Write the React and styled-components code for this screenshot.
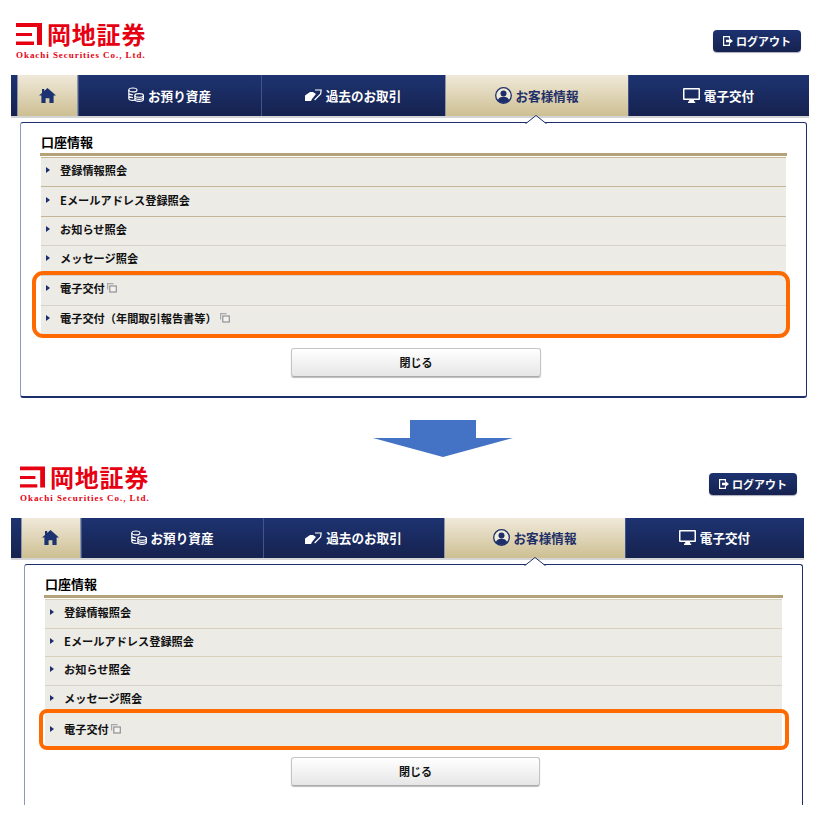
import React from 'react';
import styled, { createGlobalStyle } from 'styled-components';

const GlobalStyle = createGlobalStyle`
  html, body { margin: 0; padding: 0; background: #fff; }
  body { font-family: "Liberation Sans", "Noto Sans CJK JP", sans-serif; }
`;

const Page = styled.div`
  width: 819px;
  height: 824px;
  overflow: hidden;
`;

const Header = styled.div`
  display: flex;
  justify-content: space-between;
  align-items: flex-start;
  box-sizing: border-box;
  height: ${p => p.$height}px;
  padding: ${p => p.$top}px ${p => p.$right}px 0 ${p => p.$left}px;
`;

const Logo = styled.div`
  display: flex;
  flex-direction: column;
`;

const LogoTop = styled.div`
  display: flex;
  align-items: center;
  gap: 5px;
  height: 24px;
`;

const LogoName = styled.span`
  font-family: "Noto Sans CJK JP", sans-serif;
  font-weight: 700;
  font-size: 24px;
  line-height: 24px;
  letter-spacing: 0.8px;
  color: #e60012;
  white-space: nowrap;
`;

const LogoSub = styled.span`
  margin-top: 4px;
  font-family: "Liberation Serif", serif;
  font-weight: 700;
  font-size: 9px;
  line-height: 11px;
  letter-spacing: 0.95px;
  color: #e60012;
  white-space: nowrap;
`;

const LogoutButton = styled.div`
  display: flex;
  align-items: center;
  justify-content: center;
  gap: 3px;
  box-sizing: border-box;
  width: 88px;
  height: 22px;
  margin-top: ${p => p.$offset}px;
  border-radius: 4px;
  background: linear-gradient(#1c3270, #16224f);
  box-shadow: 0 1px 1px #aab;
  color: #fff;
  font-family: "Noto Sans CJK JP", sans-serif;
  font-weight: 700;
  font-size: 11px;
`;

const Nav = styled.div`
  display: grid;
  grid-template-columns: ${p => p.$cols};
  box-sizing: content-box;
  width: ${p => p.$width}px;
  height: ${p => p.$height}px;
  margin-left: 11px;
  padding-left: ${p => p.$lead}px;
  background: linear-gradient(#1d3371, #16224f);
  border-bottom: 2px solid #d4d4d4;
`;

const Tab = styled.div`
  display: flex;
  align-items: center;
  justify-content: center;
  gap: 4px;
  box-sizing: border-box;
  padding: 0 1px 1px 0;
  font-family: "Noto Sans CJK JP", sans-serif;
  font-weight: 700;
  font-size: 12.6px;
  color: ${p => (p.$active ? '#1f2f68' : '#fff')};
  border-left: 1px solid ${p => (p.$active ? '#8f96a8' : '#42548c')};
  background: ${p => (p.$active ? 'linear-gradient(#f0e9da, #cdbf92)' : 'transparent')};
  &:first-child { border-right: 1px solid #8f96a8; }
`;

const Panel = styled.div`
  position: relative;
  box-sizing: border-box;
  width: ${p => p.$width}px;
  height: ${p => p.$height}px;
  margin: 4px 0 0 ${p => p.$left}px;
  padding: ${p => p.$padTop}px 19px 0;
  background: #fff;
  border-top: 1px solid #1d2f6b;
  border-right: 1px solid #1d2f6b;
  border-left: 1px solid #8c99bd;
  border-bottom: ${p => (p.$open ? '0' : '2px solid #1d2f6b')};
  border-radius: 3px 3px ${p => (p.$open ? '0 0' : '3px 3px')};
`;

const Caret = styled.svg`
  position: absolute;
  top: -9px;
  left: ${p => p.$left}px;
  display: block;
`;

const Heading = styled.div`
  box-sizing: border-box;
  height: 21px;
  border-bottom: 3px solid #b3a27a;
  font-family: "Noto Sans CJK JP", sans-serif;
  font-weight: 700;
  font-size: 13px;
  line-height: 14px;
  padding-left: 1px;
  color: #000;
`;

const List = styled.div`
  margin: 1px 1px 0;
  background: #ecebe6;
  border-top: 1px solid ${p => p.$line};
`;

const Row = styled.div`
  display: flex;
  align-items: center;
  box-sizing: border-box;
  height: ${p => p.$height}px;
  padding: 0 0 4px 5px;
  border-bottom: 1px solid ${p => p.$line || 'transparent'};
  font-family: "Noto Sans CJK JP", sans-serif;
  font-weight: 700;
  font-size: 11.2px;
  color: #111;
`;

const Bullet = styled.span`
  width: 0;
  height: 0;
  margin-right: 10px;
  border-top: 3px solid transparent;
  border-bottom: 3px solid transparent;
  border-left: 4px solid #1d2f6b;
`;

const Marked = styled.div`
  position: relative;
  &::after {
    content: "";
    position: absolute;
    inset: ${p => p.$inset};
    border: 4.5px solid #ff6a00;
    border-radius: ${p => p.$radius}px;
  }
`;

const CopyMark = styled.svg`
  display: block;
  flex: none;
  margin-left: ${p => p.$gap}px;
`;

const ButtonRow = styled.div`
  display: flex;
  justify-content: center;
  margin-top: ${p => p.$top}px;
  padding-left: ${p => p.$shift}px;
`;

const CloseButton = styled.div`
  display: flex;
  align-items: center;
  justify-content: center;
  box-sizing: border-box;
  width: ${p => p.$width}px;
  height: 29px;
  border: 1px solid #c4c4c4;
  border-bottom-color: #aaa;
  border-radius: 3px;
  background: linear-gradient(#fff, #e6e6e6);
  box-shadow: 0 1px 1px #bbb;
  font-family: "Noto Sans CJK JP", sans-serif;
  font-weight: 700;
  font-size: 11px;
  color: #111;
`;

const Arrow = styled.svg`
  display: block;
  margin: 22px 0 0 373px;
`;

const HomeIcon = () => (
  <svg width="17" height="15" viewBox="0 0 17 15">
    <path fill="#1d3270" d="M8.5 0 17 7.6h-2.4V15h-4.2v-4.8H6.6V15H2.4V7.6H0L3 4.9V1h2.2v2Z" />
  </svg>
);

const CoinsIcon = () => (
  <svg width="16" height="16" viewBox="0 0 18 17" fill="none" stroke="#fff" strokeWidth="1.3">
    <ellipse cx="5.5" cy="2.8" rx="4.6" ry="2.2" />
    <path d="M.9 2.8v9.4c0 1.3 2 2.4 4.6 2.4 1 0 2-.2 2.7-.5M.9 6c0 1.3 2 2.3 4.6 2.3M.9 9.2c0 1.3 2 2.3 4.6 2.3" />
    <ellipse cx="12.5" cy="9" rx="4.8" ry="2" />
    <path d="M7.7 9v4.6c0 1.1 2.1 2 4.8 2s4.8-.9 4.8-2V9M7.7 11.4c0 1.1 2.1 2 4.8 2s4.8-.9 4.8-2" />
  </svg>
);

const TradeIcon = () => (
  <svg width="17" height="12" viewBox="0 0 17 12">
    <path fill="#fff" d="M0 6.5 5 3h3l3 2-4 5-1 2H0Z" />
    <path fill="none" stroke="#fff" strokeWidth="1.2" d="M10 1h6.2l-.6 4-6 6" />
  </svg>
);

const UserIcon = () => (
  <svg width="17" height="17" viewBox="0 0 17 17">
    <circle cx="8.5" cy="8.5" r="7.8" fill="#f0ead8" stroke="#1d2f6b" strokeWidth="1.3" />
    <circle cx="8.5" cy="6.4" r="3" fill="#1d2f6b" />
    <path fill="#1d2f6b" d="M2.7 13.4c.8-2.6 3.2-3.6 5.8-3.6s5 1 5.8 3.6a7.8 7.8 0 0 1-11.6 0Z" />
  </svg>
);

const MonitorIcon = () => (
  <svg width="17" height="15" viewBox="0 0 17 15">
    <path fill="#fff" fillRule="evenodd" d="M1 0h15a1 1 0 0 1 1 1v10a1 1 0 0 1-1 1h-5v1.4h1.2V15H5v-1.6h1.2V12H1a1 1 0 0 1-1-1V1a1 1 0 0 1 1-1Zm.5 1.5v9h14v-9Z" />
  </svg>
);

const LogoutIcon = () => (
  <svg width="10" height="10" viewBox="0 0 10 10">
    <path fill="none" stroke="#fff" strokeWidth="1.2" d="M6.4 2.6V.6H.6v8.8h5.8V7.4" />
    <path fill="#fff" d="M3 3.8h3.2V1.9L10 5 6.2 8.1V6.2H3Z" />
  </svg>
);

const LogoMark = ({ w }) => (
  <svg width={w} height="22" viewBox="0 0 26 22">
    <path fill="#e60012" d="M0 0h26v22h-5V4H0ZM0 10h16v3H0ZM0 18.5h18V22H0Z" />
  </svg>
);

const CopyIcon = ({ gap }) => (
  <CopyMark $gap={gap} width="10" height="10" viewBox="0 0 10 10" fill="none">
    <path stroke="#a8a8a8" strokeWidth="1.2" d="M.6 6.5V.6h6" />
    <rect x="2.8" y="3" width="6.5" height="6" stroke="#929292" strokeWidth="1.2" fill="#f2f2f2" />
  </CopyMark>
);

const CaretShape = ({ left }) => (
  <Caret $left={left} width="22" height="10" viewBox="0 0 22 10">
    <path fill="#fff" stroke="#1d2f6b" d="M0 9h1.5L11 1.5 20.5 9H22" />
  </Caret>
);

const tabs = [
  { icon: <CoinsIcon />, label: 'お預り資産' },
  { icon: <TradeIcon />, label: '過去のお取引' },
  { icon: <UserIcon />, label: 'お客様情報', active: true },
  { icon: <MonitorIcon />, label: '電子交付' },
];

const plainRows = ['登録情報照会', 'Eメールアドレス登録照会', 'お知らせ照会', 'メッセージ照会'];

const upper = {
  header: { height: 75, top: 22, left: 16, right: 18, logout: 8, mark: 26 },
  nav: { cols: '61px 183px 184px 183px 181px', width: 792, lead: 6, height: 41 },
  panel: { left: 20, width: 787, height: 276, padTop: 12, caret: 504 },
  lines: ['#c3b798', '#c3b798', '#d5d2ca', '#d5d2ca'],
  rowHeight: 29.4,
  marked: [
    { label: '電子交付', gap: 2, height: 30 },
    { label: '電子交付（年間取引報告書等）', gap: 3, height: 30 },
  ],
  inset: '-4.6px -4px -2.4px -9px',
  radius: 11,
  button: { top: 12.4, shift: 5, width: 250 },
};

const lower = {
  header: { height: 61, top: 8, left: 20, right: 22, logout: 8, mark: 25 },
  nav: { cols: '60px 182px 181px 181px 179px', width: 783, lead: 10, height: 40 },
  panel: { left: 24, width: 779, height: 241, padTop: 12, caret: 499, open: true },
  lines: ['#d8d0b8', '#d8d0b8', '#d5d2ca', '#ecebe6'],
  rowHeight: 28.7,
  marked: [{ label: '電子交付', gap: 2, height: 34 }],
  inset: '-6px -7px -1px -6.5px',
  radius: 8,
  button: { top: 8, shift: 4, width: 249 },
};

function Screen({ v }) {
  return (
    <section>
      <Header $height={v.header.height} $top={v.header.top} $left={v.header.left} $right={v.header.right}>
        <Logo>
          <LogoTop>
            <LogoMark w={v.header.mark} />
            <LogoName>岡地証券</LogoName>
          </LogoTop>
          <LogoSub>Okachi Securities Co., Ltd.</LogoSub>
        </Logo>
        <LogoutButton $offset={v.header.logout}>
          <LogoutIcon />
          ログアウト
        </LogoutButton>
      </Header>
      <Nav $cols={v.nav.cols} $width={v.nav.width} $lead={v.nav.lead} $height={v.nav.height}>
        <Tab $active>
          <HomeIcon />
        </Tab>
        {tabs.map(t => (
          <Tab key={t.label} $active={t.active}>
            {t.icon}
            {t.label}
          </Tab>
        ))}
      </Nav>
      <Panel $left={v.panel.left} $width={v.panel.width} $height={v.panel.height} $padTop={v.panel.padTop} $open={v.panel.open}>
        <CaretShape left={v.panel.caret} />
        <Heading>口座情報</Heading>
        <List $line={v.lines[0]}>
          {plainRows.map((label, i) => (
            <Row key={label} $height={v.rowHeight} $line={v.lines[i]}>
              <Bullet />
              {label}
            </Row>
          ))}
          <Marked $inset={v.inset} $radius={v.radius}>
            {v.marked.map((m, i) => (
              <Row key={m.label} $height={m.height} $line={i < v.marked.length - 1 ? '#d5d2ca' : 'transparent'}>
                <Bullet />
                {m.label}
                <CopyIcon gap={m.gap} />
              </Row>
            ))}
          </Marked>
        </List>
        <ButtonRow $top={v.button.top} $shift={v.button.shift}>
          <CloseButton $width={v.button.width}>閉じる</CloseButton>
        </ButtonRow>
      </Panel>
    </section>
  );
}

export default function App() {
  return (
    <Page>
      <GlobalStyle />
      <Screen v={upper} />
      <Arrow width="140" height="37" viewBox="0 0 140 37">
        <path fill="#4472c4" d="M37 0h66v18h37L70 37 0 18h37Z" />
      </Arrow>
      <Screen v={lower} />
    </Page>
  );
}
